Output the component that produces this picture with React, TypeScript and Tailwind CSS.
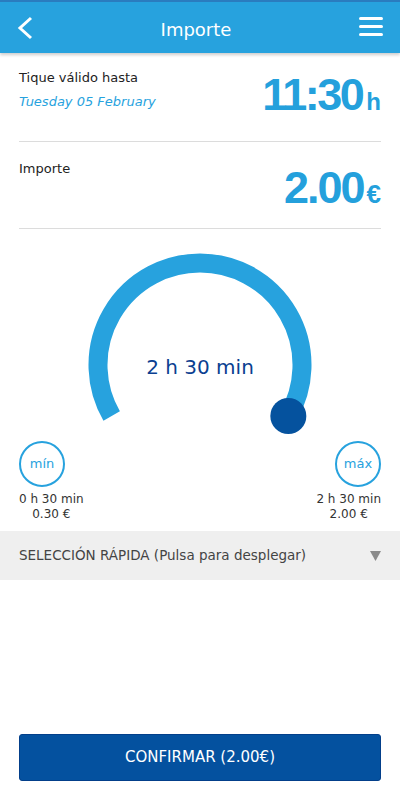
import { useState } from "react";

const FONT = { fontFamily: '"DejaVu Sans", "Open Sans", sans-serif' };
const BIG = { fontFamily: '"Liberation Sans", Arial, sans-serif' };

function Gauge() {
  // arc runs 240deg, from bottom-left (210deg) over the top to bottom-right (-30deg)
  const cx = 120;
  const cy = 120;
  const r = 102;
  const pt = (deg: number) => {
    const a = (deg * Math.PI) / 180;
    return [cx + r * Math.cos(a), cy - r * Math.sin(a)];
  };
  const [sx, sy] = pt(210);
  const [ex, ey] = pt(-30);
  return (
    <div className="relative mx-auto h-[196px] w-[240px]">
      <svg width="240" height="200" viewBox="0 0 240 200" className="absolute left-0 top-0">
        <path
          d={`M ${sx} ${sy} A ${r} ${r} 0 1 1 ${ex} ${ey}`}
          fill="none"
          stroke="#27a2de"
          strokeWidth="19"
        />
        <circle cx={ex} cy={ey} r="18" fill="#05529e" />
      </svg>
      <div className="absolute inset-x-0 top-[107px] text-center text-[20px] text-[#0b3f91]">
        2 h 30 min
      </div>
    </div>
  );
}

export default function App() {
  const [open, setOpen] = useState(false);

  return (
    <div className="flex h-[800px] w-[400px] flex-col bg-white" style={FONT}>
      {/* Header */}
      <div className="relative z-10 flex h-[53px] items-center justify-between border-t-2 border-[#2a7cbf] bg-[#27a2de] px-[17px] shadow-[0_2px_3px_rgba(0,0,0,0.2)]">
        <svg width="16" height="24" viewBox="0 0 16 24" className="mt-[1px]">
          <path d="M14 2 L3 12 L14 22" fill="none" stroke="white" strokeWidth="3" />
        </svg>
        <span className="mt-[4px] text-[18px] text-white">Importe</span>
        <svg width="24" height="20" viewBox="0 0 24 20" className="-mt-[1px]">
          <rect x="0" y="0" width="24" height="3" rx="1.5" fill="white" />
          <rect x="0" y="8" width="24" height="3" rx="1.5" fill="white" />
          <rect x="0" y="16" width="24" height="3" rx="1.5" fill="white" />
        </svg>
      </div>

      <div className="px-[19px]">
        {/* Valid until */}
        <div className="flex h-[89px] items-start justify-between border-b border-[#dcdcdc] pt-[15px]">
          <div>
            <div className="text-[13px] text-[#222]">Tique válido hasta</div>
            <div className="mt-[4px] text-[13px] italic text-[#27a2de]">Tuesday 05 February</div>
          </div>
          <div className="flex items-baseline pt-[4px] font-bold tracking-[-2.5px] text-[#24a0dc]" style={BIG}>
            <span className="text-[45px] leading-none">11:30</span>
            <span className="ml-[4px] text-[24px] leading-none tracking-normal">h</span>
          </div>
        </div>

        {/* Amount */}
        <div className="flex h-[87px] items-start justify-between border-b border-[#dcdcdc] pt-[17px]">
          <div className="text-[13px] text-[#222]">Importe</div>
          <div className="flex items-baseline pt-[6px] font-bold tracking-[-2px] text-[#24a0dc]" style={BIG}>
            <span className="text-[45px] leading-none">2.00</span>
            <span className="ml-[3px] text-[26px] leading-none tracking-normal">€</span>
          </div>
        </div>
      </div>

      {/* Gauge */}
      <div className="pt-[16px]">
        <Gauge />
      </div>

      {/* Min / max */}
      <div className="flex justify-between px-[19px]">
        <div className="flex flex-col items-start">
          <div className="flex h-[46px] w-[46px] items-center justify-center rounded-full border-2 border-[#27a2de] text-[13px] text-[#27a2de]">
            mín
          </div>
          <div className="mt-[5px] text-center text-[12px] leading-[15px] text-[#333]">
            <div>0 h 30 min</div>
            <div>0.30 €</div>
          </div>
        </div>
        <div className="flex flex-col items-end">
          <div className="flex h-[46px] w-[46px] items-center justify-center rounded-full border-2 border-[#27a2de] text-[13px] text-[#27a2de]">
            máx
          </div>
          <div className="mt-[5px] text-center text-[12px] leading-[15px] text-[#333]">
            <div>2 h 30 min</div>
            <div>2.00 €</div>
          </div>
        </div>
      </div>

      {/* Quick selection */}
      <button
        onClick={() => setOpen(!open)}
        className="mt-[9px] flex h-[49px] items-center justify-between bg-[#efefef] px-[19px] text-left"
      >
        <span className="text-[13.5px] text-[#444]">SELECCIÓN RÁPIDA (Pulsa para desplegar)</span>
        <svg width="11" height="10" viewBox="0 0 11 10">
          <path d="M0 0 H11 L5.5 10 Z" fill="#8a8a8a" />
        </svg>
      </button>

      <div className="flex-1" />

      {/* Confirm */}
      <div className="px-[19px] pb-[19px]">
        <button className="flex h-[47px] w-full items-center justify-center rounded-[3px] border border-[#033f8a] bg-[#04519f] text-[15px] text-white">
          CONFIRMAR (2.00€)
        </button>
      </div>
    </div>
  );
}
